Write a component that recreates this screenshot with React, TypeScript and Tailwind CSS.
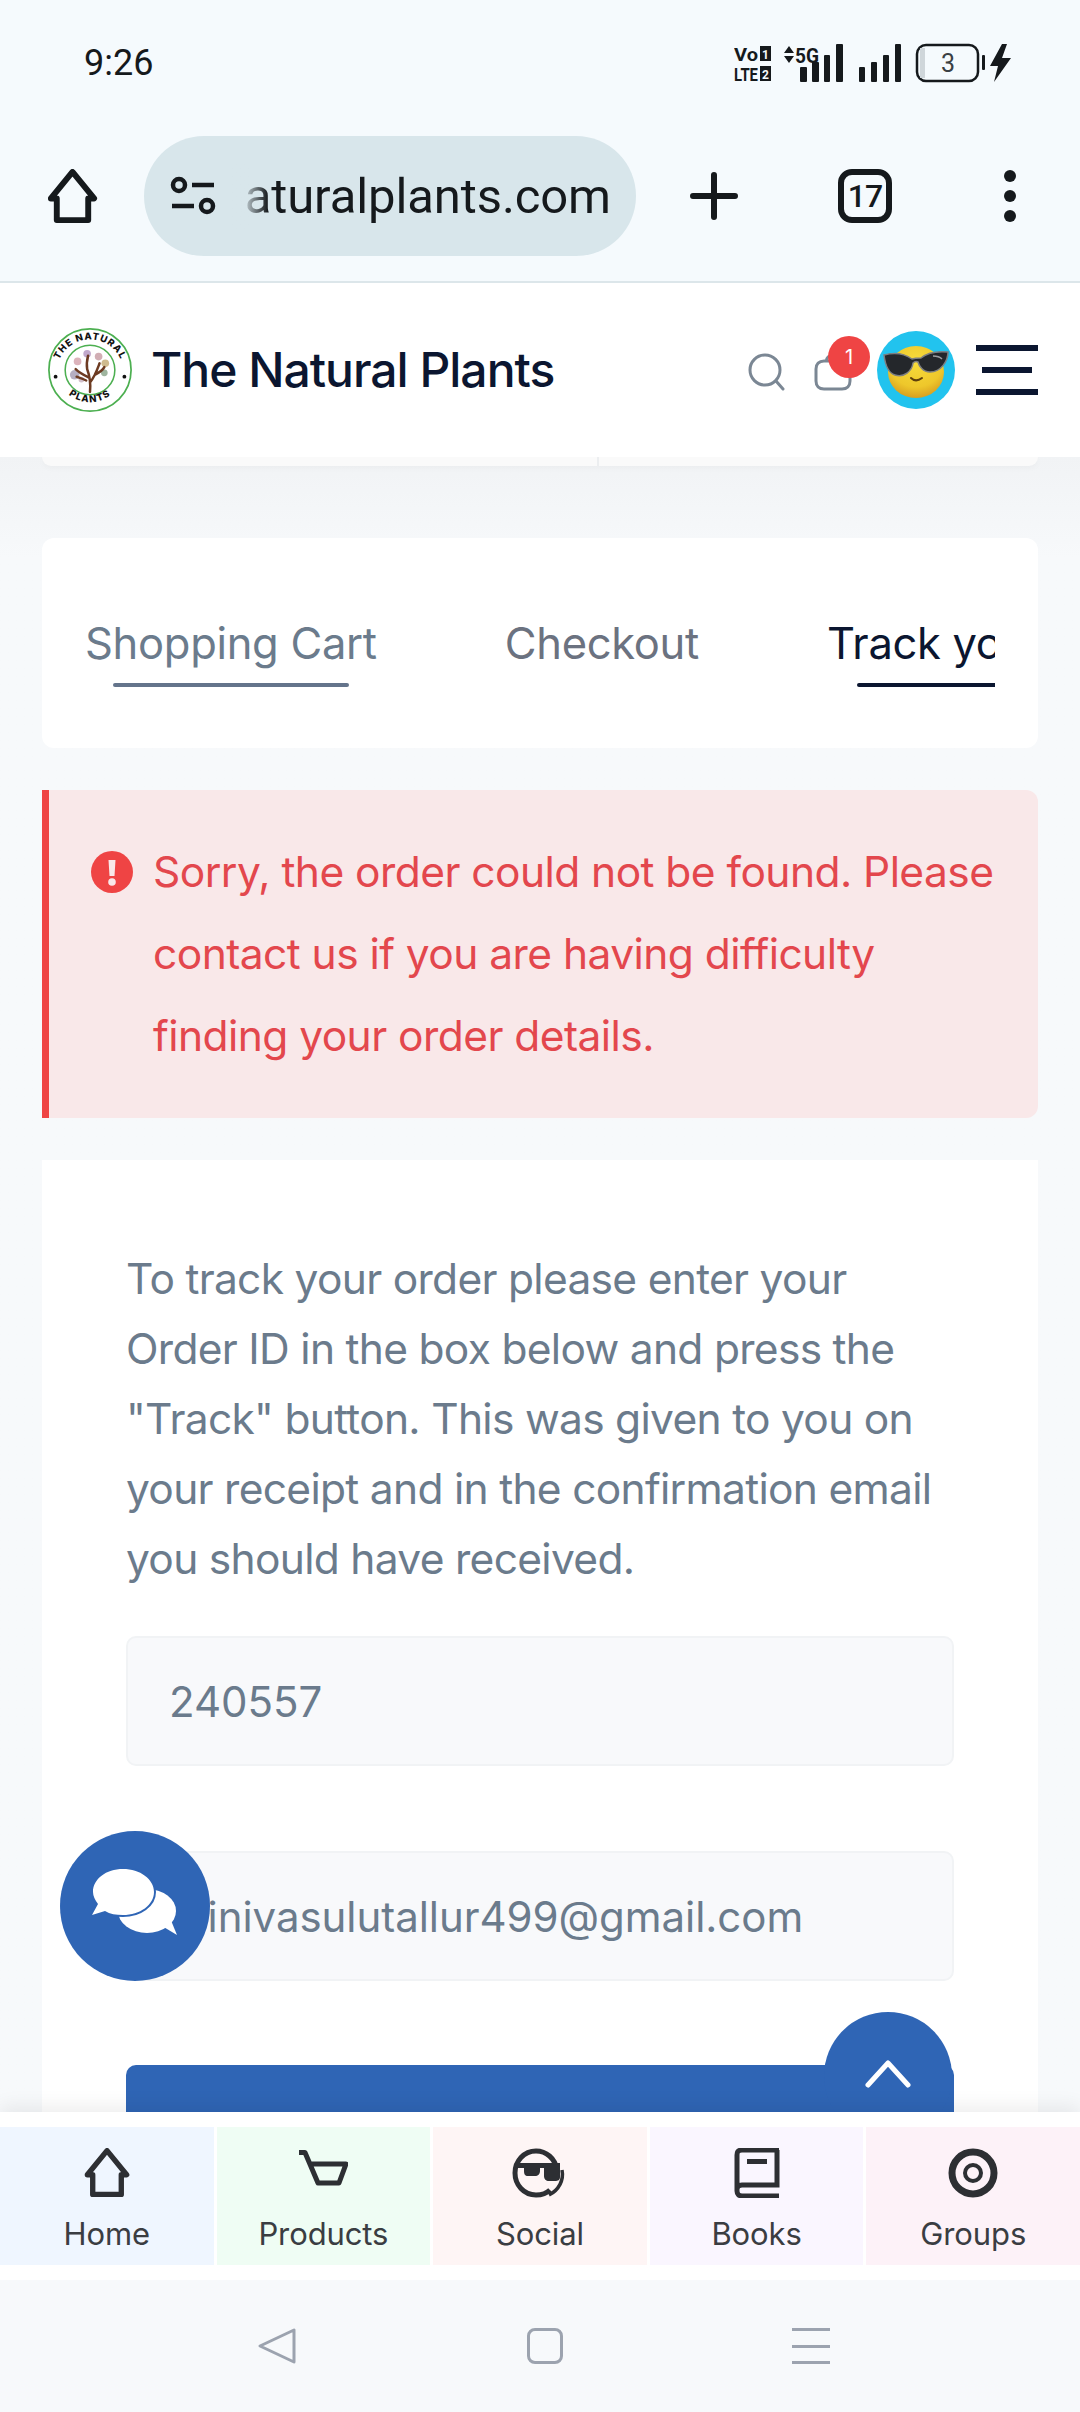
import React from 'react';

const HomeGlyph = ({ className }: { className?: string }) => (
  <svg viewBox="0 0 56 56" fill="none" stroke="currentColor" strokeWidth="6" strokeLinejoin="round" className={className}>
    <path d="M28 3 L50 30 H44 V52 H12 V30 H6 Z" />
  </svg>
);

const StatusIcons = () => (
  <div className="flex items-center h-[40px] w-[278px] relative">
    <svg viewBox="0 0 278 40" className="w-[278px] h-[40px]">
      <g fontFamily="Roboto, sans-serif" fontWeight="700" fill="#15191c">
        <text x="0" y="18" fontSize="19" textLength="24" lengthAdjust="spacingAndGlyphs">Vo</text>
        <rect x="26" y="3" width="11" height="15" />
        <text x="28" y="16" fontSize="12" fill="#f5fafc">1</text>
        <text x="0" y="38" fontSize="19" textLength="24" lengthAdjust="spacingAndGlyphs">LTE</text>
        <rect x="26" y="23" width="11" height="15" />
        <text x="28" y="36" fontSize="12" fill="#f5fafc">2</text>
        <path d="M50 10 L55 3 L60 10 Z M50 13 L60 13 L55 20 Z" />
        <text x="61" y="20" fontSize="21" textLength="24" lengthAdjust="spacingAndGlyphs">5G</text>
        <rect x="66" y="24" width="7" height="15" rx="1" />
        <rect x="78" y="19" width="7" height="20" rx="1" />
        <rect x="90" y="12" width="6" height="27" rx="1" />
        <rect x="102" y="1" width="7" height="38" rx="1" />
        <rect x="125" y="24" width="6" height="15" rx="1" />
        <rect x="137" y="19" width="6" height="20" rx="1" />
        <rect x="149" y="12" width="6" height="27" rx="1" />
        <rect x="161" y="1" width="6" height="38" rx="1" />
      </g>
      <rect x="183" y="2" width="61" height="36" rx="9" fill="none" stroke="#15191c" strokeWidth="2.5" />
      <rect x="186" y="5" width="5" height="30" fill="#cfd6da" />
      <text x="214" y="29" fontFamily="Roboto, sans-serif" fontSize="25" fill="#3a4044" textAnchor="middle">3</text>
      <rect x="248" y="12" width="3" height="15" rx="1" fill="#15191c" />
      <path d="M268 1 L256 23 H264 L260 39 L277 15 H268 L273 1 Z" fill="#15191c" />
    </svg>
  </div>
);

const Toolbar = () => (
  <div className="h-[158px] border-b-2 border-[#dce6ea] pb-[14px] flex items-center pl-[45px] text-[#15191c]">
    <HomeGlyph className="w-[55px] h-[55px] shrink-0" />
    <div className="ml-[44px] w-[492px] h-[120px] rounded-full bg-[#d8e6eb] flex items-center pl-[26px] shrink-0">
      <svg viewBox="0 0 46 40" fill="none" stroke="#15191c" strokeWidth="4.5" className="w-[46px] h-[40px] shrink-0">
        <circle cx="9" cy="9" r="6" />
        <path d="M22 9 H44 M2 30 H24" />
        <circle cx="37" cy="30" r="6" />
      </svg>
      <div className="relative ml-[14px] w-[381px] h-[70px] overflow-hidden flex items-center justify-end">
        <span className="font-['Roboto',sans-serif] text-[49px] leading-none tracking-[-0.1px] whitespace-nowrap text-[#15191c]">naturalplants.com</span>
        <div className="absolute left-0 top-0 bottom-0 w-[38px] bg-gradient-to-r from-[#d8e6eb] from-30% to-transparent" />
      </div>
    </div>
    <svg viewBox="0 0 48 48" className="ml-[54px] w-[48px] h-[48px] shrink-0" stroke="#15191c" strokeWidth="6" strokeLinecap="round">
      <path d="M24 3 V45 M3 24 H45" />
    </svg>
    <div className="ml-[100px] w-[54px] h-[54px] rounded-[14px] border-[6px] border-[#15191c] flex items-center justify-center shrink-0">
      <span className="font-['Roboto',sans-serif] font-medium text-[32px] leading-none tracking-[-1px]">17</span>
    </div>
    <div className="ml-[112px] flex flex-col gap-[8px] shrink-0">
      <div className="w-[12px] h-[12px] rounded-full bg-[#15191c]" />
      <div className="w-[12px] h-[12px] rounded-full bg-[#15191c]" />
      <div className="w-[12px] h-[12px] rounded-full bg-[#15191c]" />
    </div>
  </div>
);

const Logo = () => (
  <svg viewBox="0 0 90 90" className="w-[86px] h-[86px] shrink-0">
    <circle cx="45" cy="45" r="43" fill="#fff" stroke="#4caf50" strokeWidth="1.8" />
    <circle cx="45" cy="45" r="26" fill="#fff" stroke="#4caf50" strokeWidth="1.6" />
    <defs>
      <path id="logo-top" d="M10 48 A35 35 0 0 1 80 48" />
      <path id="logo-bottom" d="M14 60 A35 35 0 0 0 76 60" />
    </defs>
    <text fontFamily="Inter, sans-serif" fontWeight="800" fontSize="10" letterSpacing="1" fill="#111">
      <textPath href="#logo-top" startOffset="50%" textAnchor="middle">THE NATURAL</textPath>
    </text>
    <text fontFamily="Inter, sans-serif" fontWeight="800" fontSize="10" letterSpacing="1.2" fill="#111">
      <textPath href="#logo-bottom" startOffset="50%" textAnchor="middle">PLANTS</textPath>
    </text>
    <circle cx="9" cy="52" r="2" fill="#111" />
    <circle cx="81" cy="52" r="2" fill="#111" />
    <g opacity="0.85">
      <circle cx="42" cy="28" r="4" fill="#b79bc4" />
      <circle cx="54" cy="31" r="4" fill="#c9a0a8" />
      <circle cx="32" cy="36" r="4" fill="#d7a6b0" />
      <circle cx="61" cy="38" r="4" fill="#c7b07c" />
      <circle cx="29" cy="50" r="5" fill="#a9a0b8" />
      <circle cx="60" cy="48" r="3.5" fill="#8fa98f" />
      <circle cx="36" cy="55" r="3" fill="#c9b6c2" />
    </g>
    <path d="M45 68 C46 58 45 52 42 44 M45 58 C50 52 52 46 55 38 M44 53 C38 50 34 48 30 44 M42 44 C41 38 42 34 43 30 M50 50 C54 48 58 46 60 42 M41 56 C37 54 33 53 31 52" fill="none" stroke="#6d3b22" strokeWidth="2.6" strokeLinecap="round" />
  </svg>
);

const Avatar = () => (
  <svg viewBox="0 0 78 78" className="w-[78px] h-[78px] shrink-0">
    <defs>
      <radialGradient id="face" cx="50%" cy="30%" r="75%">
        <stop offset="0%" stopColor="#f7dc3c" />
        <stop offset="65%" stopColor="#eec72b" />
        <stop offset="100%" stopColor="#d2951c" />
      </radialGradient>
    </defs>
    <circle cx="39" cy="39" r="39" fill="#22c3ee" />
    <ellipse cx="39" cy="41" rx="28" ry="26" fill="url(#face)" />
    <path d="M7 24 C18 21 28 23 35 28 C38 27 41 27 44 27 C50 22 60 20 71 21 C71 30 64 41 53 41 C46 41 42 35 41 31 C39 30 37 31 36 32 C35 40 27 47 18 44 C11 42 8 32 7 24 Z" fill="#24272b" stroke="#7d7f82" strokeWidth="1.5" />
    <path d="M56 25 C60 25 63 26 65 28" stroke="#9a9da0" strokeWidth="1.5" fill="none" />
    <path d="M34 47 C37 50 41 50 45 47" stroke="#5d3f0c" strokeWidth="2" fill="none" strokeLinecap="round" />
  </svg>
);

const Header = () => (
  <div className="h-[174px] bg-white flex items-center justify-between pl-[47px] pr-[42px] relative z-10">
    <div className="flex items-center gap-[18px]">
      <Logo />
      <span className="font-['Inter',sans-serif] font-medium text-[48px] leading-none tracking-[-1px] text-[#0b1630]">The Natural Plants</span>
    </div>
    <div className="flex items-center">
      <svg viewBox="0 0 38 38" fill="none" stroke="#7b8794" strokeWidth="3" strokeLinecap="round" className="w-[38px] h-[38px] mt-[4px]">
        <circle cx="17" cy="17" r="15" />
        <path d="M28 28 L35 36" />
      </svg>
      <div className="relative ml-[28px] w-[38px] h-[38px] mt-[4px]">
        <svg viewBox="0 0 38 38" fill="none" stroke="#7b8794" strokeWidth="3" className="w-[38px] h-[38px]">
          <path d="M12 8 H28 C33 8 36 11 36 16 V28 C36 33 33 36 28 36 H10 C5 36 2 33 2 28 V16 C2 11 5 8 10 8 Z M12 9 C12 0 26 0 26 9" />
        </svg>
        <div className="absolute -top-[17px] left-[14px] w-[42px] h-[42px] rounded-full bg-[#ef4444] text-white flex items-center justify-center font-['Inter',sans-serif] text-[20px] leading-none">1</div>
      </div>
      <div className="ml-[25px]"><Avatar /></div>
      <div className="ml-[21px] w-[62px] flex flex-col items-center gap-[16px]">
        <div className="w-[62px] h-[6px] bg-[#0b1630]" />
        <div className="w-[50px] h-[6px] bg-[#0b1630]" />
        <div className="w-[62px] h-[6px] bg-[#0b1630]" />
      </div>
    </div>
  </div>
);

const Tabs = () => (
  <div className="h-[210px] bg-white rounded-[12px] px-[43px] pt-[78px]">
    <div className="flex gap-[128px] overflow-hidden font-['Inter',sans-serif] text-[43.5px] leading-[54px] tracking-[-0.3px] whitespace-nowrap">
      <div className="shrink-0 text-[#6b7b8c]">
        <div>Shopping Cart</div>
        <div className="mx-[28px] mt-[13px] h-[4px] rounded-full bg-[#64748b]" />
      </div>
      <div className="shrink-0 text-[#6b7280]">Checkout</div>
      <div className="shrink-0 text-[#0b1630]">
        <div>Track your order</div>
        <div className="ml-[30px] mt-[13px] h-[4px] rounded-full bg-[#0b1630]" />
      </div>
    </div>
  </div>
);

const Alert = () => (
  <div className="bg-[#f9e8e9] border-l-[7px] border-[#ef4444] rounded-r-[12px] pl-[42px] pr-[20px] py-[41px] flex gap-[20px]">
    <div className="w-[42px] h-[42px] mt-[20px] rounded-full bg-[#ef4444] text-white flex items-center justify-center shrink-0">
      <svg viewBox="0 0 42 42" className="w-[42px] h-[42px]" fill="#f9e8e9">
        <path d="M17.5 9 H24.5 L23.5 25 H18.5 Z" />
        <circle cx="21" cy="31" r="3.8" />
      </svg>
    </div>
    <p className="font-['Inter',sans-serif] text-[42.5px] leading-[82px] tracking-[-0.55px] text-[#e3474d]">
      Sorry, the order could not be found. Please contact us if you are having difficulty finding your order details.
    </p>
  </div>
);

const Field = ({ value, mt }: { value: string; mt: string }) => (
  <div className={`h-[130px] ${mt} rounded-[10px] border-2 border-[#f1f3f5] bg-[#f8f9fb] flex items-center pl-[41px] overflow-hidden font-['Inter',sans-serif] text-[42px] tracking-[-0.05px] text-[#6b7b8c] whitespace-nowrap`}>
    {value}
  </div>
);

const TrackForm = () => (
  <div className="bg-white flex-1 px-[84px] pt-[84px]">
    <p className="font-['Inter',sans-serif] text-[42.5px] leading-[70px] tracking-[-0.7px] text-[#6b7b8c]">
      To track your order please enter your Order ID in the box below and press the "Track" button. This was given to you on your receipt and in the confirmation email you should have received.
    </p>
    <Field value="240557" mt="mt-[42px]" />
    <Field value="srinivasulutallur499@gmail.com" mt="mt-[85px]" />
    <div className="mt-[84px] h-[100px] rounded-t-[10px] bg-[#2f65b5]" />
  </div>
);

const navItems = [
  { label: 'Home', bg: 'bg-[#eff6ff]' },
  { label: 'Products', bg: 'bg-[#effdf4]' },
  { label: 'Social', bg: 'bg-[#fef5f5]' },
  { label: 'Books', bg: 'bg-[#faf6ff]' },
  { label: 'Groups', bg: 'bg-[#fdf2f8]' },
];

const NavIcon = ({ label }: { label: string }) => {
  if (label === 'Home') return <HomeGlyph className="w-[50px] h-[50px]" />;
  if (label === 'Products')
    return (
      <svg viewBox="0 0 50 50" fill="none" stroke="currentColor" strokeWidth="5" strokeLinejoin="round" className="w-[50px] h-[50px]">
        <path d="M1 4.5 H7 L20 35 H41 L48 16 H12" />
      </svg>
    );
  if (label === 'Social')
    return (
      <svg viewBox="0 0 55 50" fill="none" className="w-[55px] h-[50px]">
        <path d="M45 22 C43 10 34 3 24 3 C12 3 3 13 3 25 C3 37 12 47 24 47 C30 47 35 45 38 42" stroke="currentColor" strokeWidth="5" />
        <path d="M50 22 C52 32 47 42 37 47" stroke="currentColor" strokeWidth="3.5" />
        <path d="M4 15 H48 V29 C48 32 46 33 43 33 H37 C34 33 32 31 32 28 V20 H28 V23 C28 26 26 28 23 28 H16 C13 28 12 26 12 23 V20 H4 Z" fill="currentColor" />
      </svg>
    );
  if (label === 'Books')
    return (
      <svg viewBox="0 0 46 50" fill="none" stroke="currentColor" strokeWidth="5" className="w-[46px] h-[50px]">
        <path d="M45 2 H8 C4 2 3 4 3 7 V43 C3 46 5 48 8 48 H45 M3 41 C3 38 5 37 8 37 H43 V2" />
        <rect x="13" y="11" width="20" height="5" fill="currentColor" stroke="none" />
      </svg>
    );
  return (
    <svg viewBox="0 0 50 50" fill="none" stroke="currentColor" className="w-[50px] h-[50px]">
      <circle cx="25" cy="25" r="21" strokeWidth="7" />
      <circle cx="25" cy="25" r="8" strokeWidth="4" />
    </svg>
  );
};

const BottomNav = () => (
  <div className="h-[168px] bg-white pt-[15px] shadow-[0_-6px_18px_rgba(0,0,0,0.07)] relative z-20 shrink-0">
    <div className="grid grid-cols-5 gap-[3px] h-[138px]">
      {navItems.map((item) => (
        <div key={item.label} className={`${item.bg} flex flex-col items-center pt-[21px] text-[#2d2f33]`}>
          <div className="h-[50px] flex items-center justify-center"><NavIcon label={item.label} /></div>
          <span className="mt-[16px] font-['Inter',sans-serif] text-[31px] leading-[40px] tracking-[-0.1px] text-[#3a3d42]">{item.label}</span>
        </div>
      ))}
    </div>
  </div>
);

const SystemNav = () => (
  <div className="h-[132px] bg-[#f7f9fb] shrink-0 flex items-start pt-[48px] relative z-20">
    <svg viewBox="0 0 38 36" fill="none" stroke="#9ca3af" strokeWidth="3" strokeLinejoin="round" className="ml-[258px] w-[38px] h-[36px]">
      <path d="M36 2 V34 L2 18 Z" />
    </svg>
    <div className="ml-[231px] w-[36px] h-[36px] rounded-[8px] border-[3px] border-[#9ca3af]" />
    <div className="ml-[229px] w-[38px] h-[36px] flex flex-col justify-between">
      <div className="h-[3px] bg-[#9ca3af]" />
      <div className="h-[3px] bg-[#9ca3af]" />
      <div className="h-[3px] bg-[#9ca3af]" />
    </div>
  </div>
);

export default function App() {
  return (
    <div className="w-[1080px] h-[2412px] relative overflow-hidden flex flex-col bg-[#f7f9fb]">
      <div className="bg-[#f5fafd] shrink-0">
        <div className="h-[125px] flex items-start justify-between pl-[84px] pr-[68px] pt-[43px]">
          <span className="font-['Roboto',sans-serif] text-[36px] leading-[40px] text-[#15191c]">9:26</span>
          <StatusIcons />
        </div>
        <Toolbar />
      </div>
      <Header />
      <div className="flex-1 min-h-0 overflow-hidden flex flex-col px-[42px] bg-gradient-to-b from-[#f1f3f5] to-[#f7f9fb] to-[100px]">
        <div className="h-[9px] bg-[#fafafa] rounded-b-[14px] shrink-0 shadow-[0_2px_6px_rgba(0,0,0,0.03)]">
          <div className="ml-[555px] w-[2px] h-full bg-[#eceef0]" />
        </div>
        <div className="mt-[72px] shrink-0"><Tabs /></div>
        <div className="mt-[42px] shrink-0"><Alert /></div>
        <div className="mt-[42px] flex-1 flex flex-col"><TrackForm /></div>
      </div>
      <BottomNav />
      <SystemNav />

      {/* floating chat + back to top */}
      <div className="absolute left-[60px] top-[1831px] w-[150px] h-[150px] rounded-full bg-[#2f65b5] flex items-center justify-center z-10">
        <svg viewBox="0 0 86 68" className="w-[86px] h-[68px] mb-[8px]" fill="#fff">
          <ellipse cx="55" cy="43" rx="29" ry="22" />
          <path d="M70 58 L85 67 L78 50 Z" />
          <path d="M31 1 C48 1 62 11 62 24 C62 37 48 47 31 47 C24 47 18 46 13 43 L0 47 L6 36 C3 32 1 28 1 24 C1 11 14 1 31 1 Z" stroke="#2f65b5" strokeWidth="4" paintOrder="stroke" />
        </svg>
      </div>
      <div className="absolute left-[824px] top-[2012px] w-[128px] h-[128px] rounded-full bg-[#2f65b5] flex justify-center pt-[48px] z-10">
        <svg viewBox="0 0 46 28" fill="none" stroke="#fff" strokeWidth="5" strokeLinecap="round" strokeLinejoin="round" className="w-[46px] h-[28px]">
          <path d="M3 25 L23 3 L43 25" />
        </svg>
      </div>
    </div>
  );
}
